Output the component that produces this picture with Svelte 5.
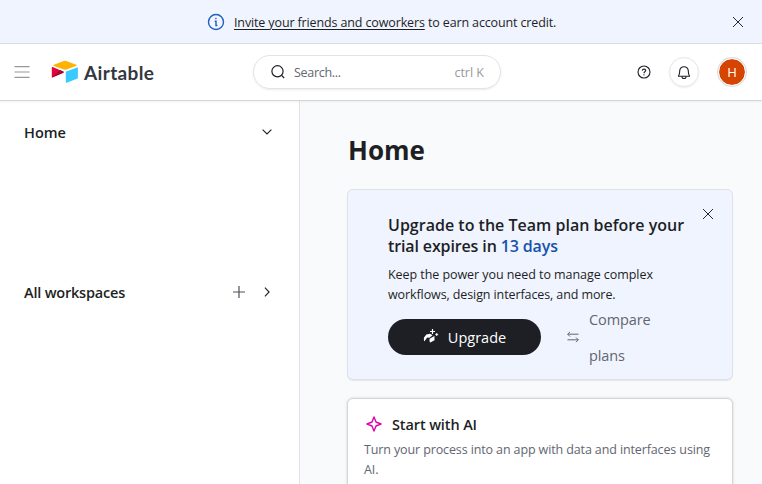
<script>
  const account = 'H';
</script>

<div class="app">
  <div class="banner">
    <svg class="info" width="18" height="18" viewBox="0 0 18 18" fill="none" stroke="#1d60ba" stroke-width="1.4">
      <circle cx="9" cy="9" r="7.5" />
      <path d="M7.700 8.200H9v4.300h1.400" />
      <circle cx="8.900" cy="5.500" r=".45" fill="#1d60ba" stroke-width=".8" />
    </svg>
    <p><a href="#invite">Invite your friends and coworkers</a> <span>to earn account credit.</span></p>
    <svg class="close" width="12" height="12" viewBox="0 0 12 12" stroke="#1d1f25" stroke-width=".95"><path d="M1 1l10 10M11 1L1 11" /></svg>
  </div>

  <header>
    <svg class="menu" width="16" height="14" viewBox="0 0 16 14" stroke="#96989c" stroke-width="1.2"><path d="M.5 1.600h15M.5 7h15M.5 12.400h15" /></svg>
    <div class="logo">
      <svg width="28" height="24" viewBox="0 0 28 24">
        <path fill="#fcb400" d="M12.700 1 2.900 4.700c-.6.3-.6.9 0 1.200l9.900 3.700c.8.3 1.700.3 2.500 0l9.900-3.700c.6-.3.600-.9 0-1.200L15.200 1a3.500 3.500 0 0 0-2.500 0z" />
        <path fill="#39caff" d="M14.800 12.200v9.900c0 .5.500.8.900.6L26.500 18.500c.3-.1.400-.3.400-.6V8c0-.5-.5-.8-.9-.6L15.200 11.600c-.3.100-.4.300-.4.600z" />
        <path fill="#dc043b" d="M12.300 12.700 1.500 17.600C1.100 17.800.8 17.500.8 17V7.800c0-.6.400-.9.900-.7l10.400 4.400c.7.300.7.900.2 1.200z" />
        <path fill="#a8042e" d="m1 17.600 8.300-7.300 2.800 1.200c.7.300.7.900.2 1.200z" />
      </svg>
      <span class="word">Airtable</span>
    </div>
    <div class="search">
      <svg width="16" height="16" viewBox="0 0 16 16" fill="none" stroke="#1d1f25" stroke-width="1.200"><circle cx="7.500" cy="7.300" r="5.600" /><path d="m11.600 11.400 2.600 2.600" /></svg>
      <span class="placeholder">Search...</span>
      <span class="shortcut">ctrl K</span>
    </div>
    <svg class="help" width="14" height="14" viewBox="0 0 14 14" fill="none" stroke="#1d1f25" stroke-width="1.100"><circle cx="7" cy="7" r="6" /><path d="M5.300 5.600c.1-1 .8-1.500 1.700-1.500s1.700.6 1.700 1.500C8.700 6.900 7 6.700 7 8.200" /><circle cx="7" cy="9.900" r=".3" stroke-width=".8" /></svg>
    <div class="bell">
      <svg width="14" height="16" viewBox="0 0 14 16" fill="none" stroke="#1d1f25" stroke-width="1.100" stroke-linejoin="round"><path d="M2.700 7a4.300 4.300 0 0 1 8.600 0c0 2.500.5 3.900 1.300 5.200H1.400c.8-1.300 1.300-2.700 1.300-5.200z" /><path d="M5 12.400c0 2.800 4 2.800 4 0" /></svg>
    </div>
    <div class="avatar">{account}</div>
  </header>

  <div class="body">
    <nav>
      <div class="row">
        <span class="nav-home">Home</span>
        <svg width="12" height="12" viewBox="0 0 12 12" fill="none" stroke="#1d1f25" stroke-width="1.100"><path d="m1.600 3.700 4.400 4.200 4.400-4.200" /></svg>
      </div>
      <div class="row second">
        <span class="nav-all">All workspaces</span>
        <svg class="plus" width="12" height="12" viewBox="0 0 12 12" stroke="#4d5058" stroke-width="1.200"><path d="M6 0v12M0 6h12" /></svg>
        <svg width="12" height="12" viewBox="0 0 12 12" fill="none" stroke="#1d1f25" stroke-width="1.100"><path d="m3.900 1.700 4.200 4.300-4.200 4.300" /></svg>
      </div>
    </nav>

    <main>
      <h1>Home</h1>
      <section class="upgrade">
        <h2><span class="h-one">Upgrade to the Team plan before your</span><br /><span class="h-two">trial expires in <b>13 days</b></span></h2>
        <p><span class="p-one">Keep the power you need to manage complex</span><br /><span class="p-two">workflows, design interfaces, and more.</span></p>
        <div class="actions">
          <button>
            <svg width="16" height="16" viewBox="0 0 16 16" fill="#fff"><path d="M1 8.400 3.400 5.600 7 4.700l2.600 1.500-3.200 2.500-2.200-.2-2.700 3.700c-.6.300-.8-2.700-.5-3.800zM6.600 9.800l4.900-2.700v4.200L7.200 13.400c-.6.200-.8-2.400-.6-3.600z" /><path d="M9.500 0v5M7 2.500h5" stroke="#fff" stroke-width="1.200" /><path d="m13.700 4 .5 1 1 .5-1 .5-.5 1-.5-1-1-.5 1-.5z" stroke="#fff" stroke-width=".4" /></svg>
            <span>Upgrade</span>
          </button>
          <div class="compare">
            <svg width="14" height="14" viewBox="0 0 14 14" fill="none" stroke="#616670" stroke-width="1"><path d="M12.500 4.200H1.700M4 1.900 1.700 4.200 4 6.500M1.500 9.800h10.800M10 7.500l2.300 2.300-2.300 2.300" /></svg>
            <span class="plans">Compare<br />plans</span>
          </div>
        </div>
        <svg class="dismiss" width="12" height="12" viewBox="0 0 12 12" stroke="#1d1f25" stroke-width=".95"><path d="M1 1l10 10M11 1L1 11" /></svg>
      </section>
      <section class="start">
        <h3>
          <svg width="18" height="18" viewBox="0 0 18 18" fill="none" stroke="#dd04a8" stroke-width="1.400" stroke-linejoin="round"><path d="M9 2 11 7 16 9l-5 2L9 16l-2-5L2 9l5-2z" /></svg>
          <span>Start with AI</span>
        </h3>
        <p>Turn your process into an app with data and interfaces using<br />AI.</p>
      </section>
    </main>
  </div>
</div>

<style>
  :global(body) { margin: 0; overflow: hidden; }
  .app {
    width: 762px; height: 484px; overflow: hidden;
    display: flex; flex-direction: column;
    font-family: "Open Sans", "Noto Sans", sans-serif;
    font-size: 12.5px; color: #1d1f25; white-space: nowrap;
  }
  svg { display: block; flex: none; }
  p, h1, h2, h3 { margin: 0; }
  .banner {
    box-sizing: border-box; height: 44px; flex: none; display: flex; align-items: center;
    background: #f0f4ff; border-bottom: 1px solid #d9deea; padding: 0 18px 0 207px;
  }
  .banner p { margin-left: 9px; flex: 1; font-size: 12.5px; letter-spacing: -.13px; line-height: 18px; padding-top: 2px; }
  .banner a { color: inherit; text-decoration: underline; text-underline-offset: 2px; text-decoration-thickness: 1px; }
  header {
    box-sizing: border-box; height: 57px; flex: none; display: flex; align-items: center;
    background: #fff; border-bottom: 1px solid #d6d7d9; padding: 0 16px 0 14px;
    box-shadow: 0 1px 2px rgba(0, 0, 0, .06); position: relative;
  }
  .logo { display: flex; align-items: center; margin-left: 21px; width: 202px; gap: 5px; }
  .word { font: 700 19px/24px Lato, sans-serif; color: #333740; letter-spacing: .35px; padding-top: 1px; }
  .search {
    box-sizing: border-box; width: 248px; height: 34px; border-radius: 17px; border: 1px solid #e2e3e5;
    box-shadow: 0 1px 2px rgba(0, 0, 0, .08); display: flex; align-items: center; padding: 0 16px 0 16px;
  }
  .placeholder { flex: 1; margin-left: 8px; color: #616670; letter-spacing: -.3px; }
  .shortcut { color: #979aa0; }
  .help { margin-left: 136px; }
  .bell {
    box-sizing: border-box; width: 30px; height: 30px; border-radius: 50%; border: 1px solid #e4e5e7; margin-left: 18px;
    box-shadow: 0 1px 2px rgba(0, 0, 0, .08); display: flex; align-items: center; justify-content: center;
  }
  .avatar {
    box-sizing: border-box; width: 28px; height: 28px; border-radius: 50%; background: #d54401; background-clip: padding-box;
    border: 1px solid #fff; box-shadow: 0 0 0 1px #dcdddf; color: #fff; font: 13px/26px "Open Sans", sans-serif; text-align: center; margin-left: 19px;
  }
  .body { flex: 1; display: flex; min-height: 0; }
  nav { box-sizing: border-box; width: 300px; border-right: 1px solid #e2e3e5; background: #fff; padding: 21px 26px 0 24px; }
  .row { display: flex; align-items: center; height: 20px; font-size: 14.5px; font-weight: 550; letter-spacing: -.2px; }
  .row span { flex: 1; }
  .nav-home { letter-spacing: 0; }
  .second { margin-top: 140px; }
  .plus { margin-right: 16px; }
  main { flex: 1; background: #f9fafb; padding: 31px 29px 0 47px; }
  h1 { font-size: 26px; line-height: 36px; font-weight: 700; padding-left: 1px; }
  .upgrade {
    box-sizing: border-box; position: relative; margin-top: 21px; width: 386px; height: 191px; padding: 25px 40px 0;
    background: #f0f4ff; border: 1px solid #dfe2e8; border-radius: 6px; box-shadow: 0 1px 1px rgba(0, 0, 0, .08);
  }
  h2 { font-size: 16px; line-height: 21px; font-weight: 550; letter-spacing: .01px; }
  .h-two { letter-spacing: -.13px; }
  b { color: #1553ab; font-weight: 550; }
  .upgrade p { margin-top: 8px; line-height: 20px; letter-spacing: -.06px; }
  .upgrade .p-two { letter-spacing: -.1px; }
  .actions { display: flex; margin-top: -4px; align-items: center; }
  button {
    box-sizing: border-box; width: 153px; height: 36px; border: 0; border-radius: 18px; background: #1d1f25; color: #fff; padding: 0;
    font: 14.5px/20px "Open Sans", sans-serif; display: flex; align-items: center; justify-content: center; gap: 8px;
  }
  button span { padding: 1px 0 0 1px; }
  .plans { padding-top: 2px; }
  .actions { height: 72px; }
  .compare { display: flex; align-items: center; margin-left: 25px; gap: 9px; color: #616670; font-size: 14.500px; line-height: 36px; letter-spacing: -.1px; }
  .dismiss { position: absolute; right: 18px; top: 18px; }
  .start {
    box-sizing: border-box; margin-top: 18px; width: 386px; height: 150px; padding: 15px 16px 0; background: #fff;
    border: 1px solid #d5d6d8; border-radius: 6px; box-shadow: 0 0 3px rgba(0, 0, 0, .15);
  }
  h3 { display: flex; align-items: center; gap: 9px; height: 20px; font-size: 14.5px; font-weight: 550; padding-left: 1px; letter-spacing: -.12px; }
  .start p { margin-top: 6px; line-height: 20px; letter-spacing: -.12px; color: #616670; }
</style>
